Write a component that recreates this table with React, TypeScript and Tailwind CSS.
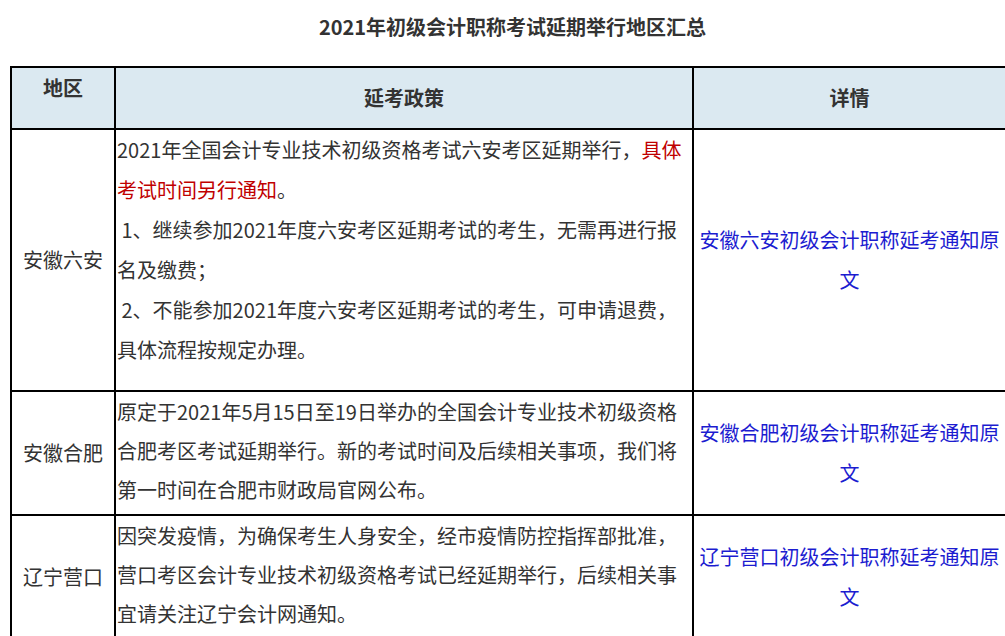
const cjk = "font-['Noto_Sans_CJK_SC','Noto_Sans',sans-serif]";

const rows = [
  {
    area: "安徽六安",
    link: "安徽六安初级会计职称延考通知原文",
    pad: "pb-[20px] leading-[40px]",
    policy: (
      <>
        <p>
          2021年全国会计专业技术初级资格考试六安考区延期举行，
          <span className="text-[#c00000]">具体考试时间另行通知</span>。
        </p>
        <p>&nbsp;1、继续参加2021年度六安考区延期考试的考生，无需再进行报名及缴费；</p>
        <p>&nbsp;2、不能参加2021年度六安考区延期考试的考生，可申请退费，具体流程按规定办理。</p>
      </>
    ),
  },
  {
    area: "安徽合肥",
    link: "安徽合肥初级会计职称延考通知原文",
    pad: "pb-[5px] leading-[39px]",
    policy: (
      <p>
        原定于2021年5月15日至19日举办的全国会计专业技术初级资格合肥考区考试延期举行。新的考试时间及后续相关事项，我们将第一时间在合肥市财政局官网公布。
      </p>
    ),
  },
  {
    area: "辽宁营口",
    link: "辽宁营口初级会计职称延考通知原文",
    pad: "pb-[4px] leading-[39px]",
    policy: (
      <p>
        因突发疫情，为确保考生人身安全，经市疫情防控指挥部批准，营口考区会计专业技术初级资格考试已经延期举行，后续相关事宜请关注辽宁会计网通知。
      </p>
    ),
  },
];

export default function App() {
  return (
    <div className={`${cjk} w-[1005px] h-[636px] overflow-hidden bg-white text-[20px] leading-[40px] text-[#333333]`}>
      <h1 className="pt-[7px] pl-[20px] text-center font-bold text-[20px] leading-[40px] text-[#333333]">
        2021年初级会计职称考试延期举行地区汇总
      </h1>

      <div className="mt-[19px] ml-[10px] grid w-[995px] grid-cols-[104px_578px_313px] border-t-2 border-l-2 border-black">
        {/* header */}
        <div className="h-[62px] border-r-2 border-b-2 border-black bg-[#dbe9f1] text-center font-bold">
          地区
        </div>
        <div className="flex h-[62px] items-center justify-center border-r-2 border-b-2 border-black bg-[#dbe9f1] font-bold">
          延考政策
        </div>
        <div className="flex h-[62px] items-center justify-center border-r-2 border-b-2 border-black bg-[#dbe9f1] font-bold">
          详情
        </div>

        {rows.map((row) => (
          <div key={row.area} className="contents">
            <div className="flex items-center justify-center border-r-2 border-b-2 border-black">
              {row.area}
            </div>
            <div className={`border-r-2 border-b-2 border-black pl-[1px] pr-[5px] ${row.pad}`}>
              {row.policy}
            </div>
            <div className="flex items-center justify-center border-r-2 border-b-2 border-black px-[3px] text-center text-[#1c1cd0]">
              <a href="#">{row.link}</a>
            </div>
          </div>
        ))}
      </div>
    </div>
  );
}
